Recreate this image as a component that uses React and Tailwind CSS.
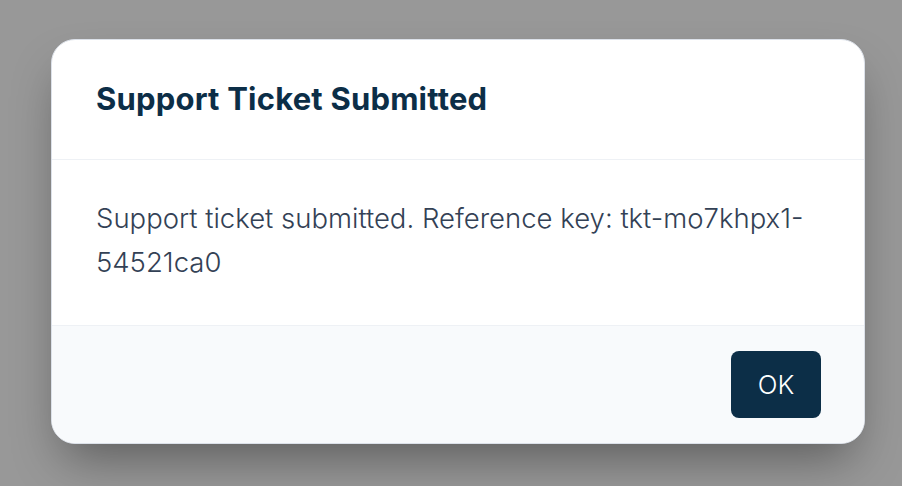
export default function App() {
  return (
    <div
      className="w-[902px] h-[486px] bg-[#989898] pl-[51px] pt-[39px] overflow-hidden"
      style={{ fontFamily: 'Inter, "Open Sans", sans-serif' }}
    >
      <div className="w-[814px] bg-white rounded-[24px] border border-[#dce1e9] overflow-hidden shadow-[0_25px_50px_-12px_rgba(0,0,0,0.4)]">
        {/* Header */}
        <div className="h-[120px] px-11 flex items-center border-b border-[#eef1f5]">
          <h2 className="text-[31px] font-bold text-[#0c2e47] tracking-[0.2px]">
            Support Ticket Submitted
          </h2>
        </div>

        {/* Body */}
        <div className="px-11 pt-9 pb-[41px]">
          <p className="text-[27.5px] leading-[44px] font-light text-[#334155]">
            Support ticket submitted. Reference key: tkt-mo7khpx1-54521ca0
          </p>
        </div>

        {/* Footer */}
        <div className="bg-[#f8fafc] border-t border-[#eef1f5] px-[43px] pt-[25px] pb-[25px] flex justify-end">
          <button className="w-[90px] h-[67px] rounded-[8px] bg-[#0c2e47] text-white text-[26px] font-light">
            OK
          </button>
        </div>
      </div>
    </div>
  );
}
